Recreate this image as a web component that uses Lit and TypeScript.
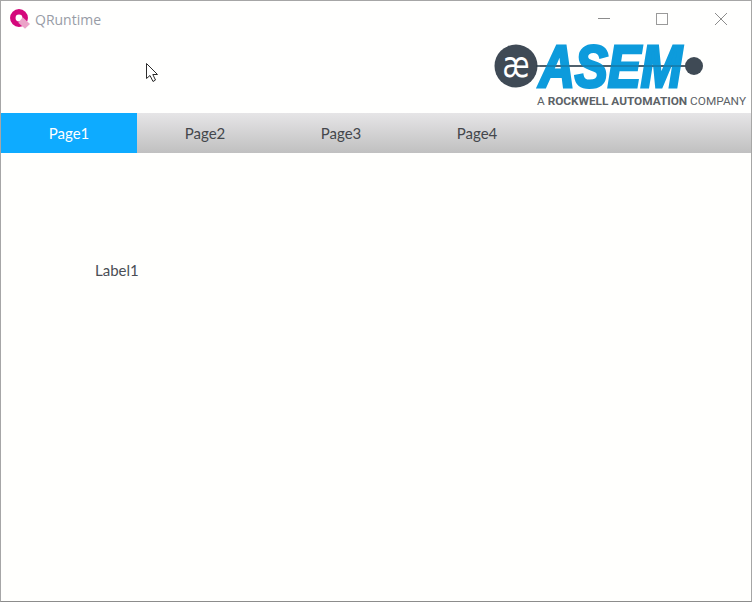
import { LitElement, html, css, svg } from "lit";
import { customElement } from "lit/decorators.js";

const tabs = ["Page1", "Page2", "Page3", "Page4"];

@customElement("app-root")
export class AppRoot extends LitElement {
  static styles = css`
    :host { display: block; width: 752px; height: 602px; }
    .window {
      position: relative; box-sizing: border-box; width: 752px; height: 602px;
      border: 1px solid #a6a6a6; border-bottom-color: #8c8c8c; background: #fffffd;
      display: flex; flex-direction: column; overflow: hidden;
      font-family: Lato, sans-serif;
    }
    .header { height: 112px; display: flex; flex-direction: column; flex: none; background: #fffffe; }
    .titlebar { display: flex; justify-content: space-between; align-items: center; height: 36px; flex: none; }
    .title {
      display: flex; align-items: center; gap: 5px; padding-left: 9px;
      font-family: "Open Sans", sans-serif; font-size: 14px; color: #989ca6;
    }
    .title svg { display: block; }
    .controls { display: flex; align-items: center; gap: 46px; padding-right: 24px; }
    .controls svg { display: block; }
    .logo-row { display: flex; justify-content: flex-end; padding: 6px 3px 0 0; }
    .logo { display: block; }
    .tabs {
      display: flex; height: 40px; flex: none;
      background: linear-gradient(#e6e5e7, #c0c0c0);
    }
    .tab {
      width: 136px; display: flex; align-items: center; justify-content: center;
      font-size: 15px; color: #44474c;
    }
    .tab.active { background: #0eabff; color: #fff; }
    .content { flex: 1; padding: 107px 0 0 94px; }
    .label { font-size: 15px; line-height: 20px; color: #4a4e55; }
    .cursor { position: absolute; left: 144px; top: 61px; }
  `;

  render() {
    return html`
      <div class="window">
        <div class="header">
          <div class="titlebar">
            <div class="title">
              <svg width="20" height="20" viewBox="0 0 20 20">
                <circle cx="9" cy="9" r="6.2" fill="none" stroke="#d4087c" stroke-width="5.5"></circle>
                <path d="M12.7 8.3 L20 15 L15 19.7 L8.3 13.7 Z" fill="#eba3c8"></path>
              </svg>
              <span>QRuntime</span>
            </div>
            <div class="controls">
              <svg width="12" height="12" viewBox="0 0 12 12"><path d="M0 5.5H12" stroke="#8c8c8c"></path></svg>
              <svg width="12" height="12" viewBox="0 0 12 12"><rect x=".5" y=".5" width="11" height="11" fill="none" stroke="#9a9a9a"></rect></svg>
              <svg width="13" height="12" viewBox="0 0 13 12"><path d="M1 0L13 12M13 0L1 12" stroke="#8c8c8c"></path></svg>
            </div>
          </div>
          <div class="logo-row">${this.logo()}</div>
        </div>
        <div class="tabs">
          ${tabs.map((t, i) => html`<div class="tab ${i === 0 ? "active" : ""}">${t}</div>`)}
        </div>
        <div class="content"><div class="label">Label1</div></div>
        <svg class="cursor" width="16" height="22" viewBox="0 0 16 22">
          <path d="M1.5 1.5V16.5L5 13.5L8 19.5L10.5 18L7.8 12.5H12.5Z" fill="#fff" stroke="#2c2c2c" stroke-width="1"></path>
        </svg>
      </div>
    `;
  }

  logo() {
    return html`<svg class="logo" width="254" height="66" viewBox="0 0 254 66">
      ${svg`
        <circle cx="22" cy="23" r="21.5" fill="#3f4a55"></circle>
        <text x="8.5" y="34" font-family="'DejaVu Sans', sans-serif" font-size="35" fill="#fff" textLength="27" lengthAdjust="spacingAndGlyphs">æ</text>
        <path d="M42 23H195" stroke="#2b3f4c" stroke-width="1.5"></path>
        <text x="45" y="44" font-family="'Liberation Sans', sans-serif" font-weight="700" font-style="italic" font-size="60"
          fill="#0d9bdc" stroke="#0d9bdc" stroke-width="3" textLength="143" lengthAdjust="spacingAndGlyphs">ASEM</text>
        <path d="M46 23H192" stroke="#26414f" stroke-width="1.2" opacity=".55"></path>
        <circle cx="200" cy="23" r="9" fill="#3f4a55"></circle>
        <text x="43" y="62" font-family="'Roboto', sans-serif" font-size="11.5" fill="#5c6267" textLength="209" lengthAdjust="spacingAndGlyphs"
          >A <tspan font-weight="700">ROCKWELL AUTOMATION</tspan> COMPANY</text>
      `}
    </svg>`;
  }
}
